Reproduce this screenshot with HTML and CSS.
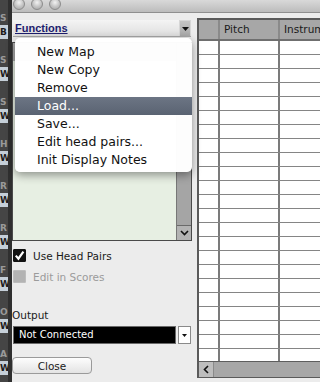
FILE: index.html
```html
<!DOCTYPE html>
<html lang="en">
<head>
    <meta charset="UTF-8">
    <meta name="viewport" content="width=device-width, initial-scale=1.0">
    <title>Drum Map</title>
    <link rel="stylesheet" href="styles.css">
</head>
<body>
<div class="screen">
    <!-- window behind, only its right edge shows -->
    <div class="backdrop">
        <div class="group"><div class="tag">S</div><div class="key">B</div></div>
        <div class="group"><div class="tag">S</div><div class="key">W</div></div>
        <div class="group"><div class="tag">S</div><div class="key">W</div></div>
        <div class="group"><div class="tag">H</div><div class="key">W</div></div>
        <div class="group"><div class="tag">R</div><div class="key">W</div></div>
        <div class="group"><div class="tag">R</div><div class="key">W</div></div>
        <div class="group"><div class="tag">F</div><div class="key">W</div></div>
        <div class="group"><div class="tag">O</div><div class="key">W</div></div>
        <div class="group"><div class="tag">A</div><div class="key">W</div></div>
    </div>

    <div class="window">
        <div class="titlebar">
            <span class="light"></span>
            <span class="light"></span>
            <span class="light"></span>
        </div>

        <div class="content">
            <div class="side">
                <div class="combo">
                    <span class="combo-text">Functions</span>
                    <span class="combo-arrow">
                        <svg width="7" height="4" viewBox="0 0 7 4"><polygon points="0,0 7,0 3.5,4" fill="#111"/></svg>
                    </span>
                </div>

                <div class="list">
                    <div class="list-body">
                        <div class="list-head"></div>
                    </div>
                    <div class="vscroll">
                        <div class="vtrack"></div>
                        <div class="vbtn">
                            <svg width="9" height="6" viewBox="0 0 9 6"><polyline points="1,1 4.5,4.5 8,1" fill="none" stroke="#111" stroke-width="1.6"/></svg>
                        </div>
                    </div>
                </div>

                <div class="check">
                    <span class="box box-on">
                        <svg width="13" height="13" viewBox="0 0 13 13"><polyline points="2.8,6.6 5.4,9.6 10.4,2.6" fill="none" stroke="#fff" stroke-width="2.2"/></svg>
                    </span>
                    <span>Use Head Pairs</span>
                </div>
                <div class="check check-off">
                    <span class="box"></span>
                    <span>Edit in Scores</span>
                </div>

                <div class="field-label">Output</div>
                <div class="output">
                    <span class="output-text">Not Connected</span>
                    <span class="output-arrow">
                        <svg width="5" height="3" viewBox="0 0 5 3"><polygon points="0,0 5,0 2.5,3" fill="#111"/></svg>
                    </span>
                </div>

                <button class="close-btn">Close</button>
            </div>

            <div class="table">
                <div class="thead">
                    <span></span>
                    <span>Pitch</span>
                    <span>Instrument</span>
                </div>
                <div class="tbody">
                    <div class="row"><span></span><span></span><span></span></div>
                    <div class="row"><span></span><span></span><span></span></div>
                    <div class="row"><span></span><span></span><span></span></div>
                    <div class="row"><span></span><span></span><span></span></div>
                    <div class="row"><span></span><span></span><span></span></div>
                    <div class="row"><span></span><span></span><span></span></div>
                    <div class="row"><span></span><span></span><span></span></div>
                    <div class="row"><span></span><span></span><span></span></div>
                    <div class="row"><span></span><span></span><span></span></div>
                    <div class="row"><span></span><span></span><span></span></div>
                    <div class="row"><span></span><span></span><span></span></div>
                    <div class="row"><span></span><span></span><span></span></div>
                    <div class="row"><span></span><span></span><span></span></div>
                    <div class="row"><span></span><span></span><span></span></div>
                    <div class="row"><span></span><span></span><span></span></div>
                    <div class="row"><span></span><span></span><span></span></div>
                    <div class="row"><span></span><span></span><span></span></div>
                    <div class="row"><span></span><span></span><span></span></div>
                    <div class="row"><span></span><span></span><span></span></div>
                    <div class="row"><span></span><span></span><span></span></div>
                    <div class="row"><span></span><span></span><span></span></div>
                    <div class="row"><span></span><span></span><span></span></div>
                    <div class="row"><span></span><span></span><span></span></div>
                </div>
                <div class="hscroll">
                    <div class="hbtn">
                        <svg width="6" height="9" viewBox="0 0 6 9"><polyline points="5,1 1.5,4.5 5,8" fill="none" stroke="#111" stroke-width="1.6"/></svg>
                    </div>
                </div>
            </div>

            <!-- open popup of the Functions combo -->
            <ul class="menu">
                <li>New Map</li>
                <li>New Copy</li>
                <li>Remove</li>
                <li class="active">Load...</li>
                <li>Save...</li>
                <li>Edit head pairs...</li>
                <li>Init Display Notes</li>
            </ul>
        </div>
    </div>
</div>
</body>
</html>
```

FILE: styles.css
```css
* {
    box-sizing: border-box;
}
body {
    margin: 0;
    font-family: "DejaVu Sans", sans-serif;
    background-color: #3f3f3f;
}
.screen {
    display: flex;
    width: 320px;
    height: 382px;
    overflow: hidden;
}

/* background window edge */
.backdrop {
    width: 12px;
    flex: none;
    display: flex;
    flex-direction: column;
    gap: 14px;
    padding-top: 11px;
    background-color: #454545;
    border-right: 4px solid #2f2f2f;
    overflow: hidden;
}
.tag, .key {
    height: 14px;
    line-height: 14px;
    font-size: 9px;
    font-weight: bold;
    white-space: nowrap;
}
.tag {
    color: #9a9a9a;
}
.key {
    background-color: #c5cfd8;
    color: #1c1c1c;
}

/* main window */
.window {
    flex: 1;
    min-width: 0;
    display: flex;
    flex-direction: column;
    background-color: #ececec;
}
.titlebar {
    height: 13px;
    flex: none;
    display: flex;
    gap: 6px;
    padding-left: 1px;
    background: linear-gradient(#d9d9d9, #bcbcbc);
    border-bottom: 1px solid #8f8f8f;
    overflow: hidden;
}
.light {
    width: 12px;
    height: 12px;
    margin-top: -2px;
    border-radius: 50%;
    border: 1px solid #8c8c8c;
    background: radial-gradient(circle at 50% 35%, #f2f2f2, #c2c2c2 55%, #a2a2a2);
}
.content {
    position: relative;
    flex: 1;
    display: flex;
    gap: 5px;
}

/* left column */
.side {
    width: 180px;
    flex: none;
    display: flex;
    flex-direction: column;
    padding-top: 7px;
}
.combo {
    display: flex;
    width: 178px;
    height: 17px;
    margin-left: 1px;
    background: linear-gradient(#f4f4f4, #dedede);
    border-bottom: 1px solid #a8a8a8;
}
.combo-text {
    flex: 1;
    padding-left: 2px;
    font-family: "Liberation Sans", Arial, sans-serif;
    font-size: 11px;
    font-weight: bold;
    line-height: 16px;
    color: #1d1d6e;
    text-decoration: underline;
}
.combo-arrow {
    width: 12px;
    display: flex;
    align-items: center;
    justify-content: center;
    background: linear-gradient(#c4c4c4, #a9a9a9);
    border: 1px solid #d6d6d6;
    border-bottom: none;
}
.list {
    display: flex;
    height: 199px;
    margin-top: 5px;
    border: 1px solid #4a4a4a;
    background-color: #e7efe3;
}
.list-body {
    flex: 1;
}
.list-head {
    height: 18px;
    background-color: #a9a9a9;
}
.vscroll {
    width: 15px;
    display: flex;
    flex-direction: column;
    border-left: 1px solid #777;
}
.vtrack {
    flex: 1;
    background-color: #a5a5a5;
}
.vbtn {
    height: 15px;
    display: flex;
    align-items: center;
    justify-content: center;
    background-color: #b3b3b3;
    border-top: 1px solid #6a6a6a;
}
.check {
    display: flex;
    align-items: center;
    gap: 7px;
    height: 13px;
    margin-top: 8px;
    margin-left: 1px;
    font-size: 10.5px;
    color: #1a1a1a;
}
.check-off {
    color: #9b9b9b;
}
.box {
    width: 13px;
    height: 13px;
    flex: none;
    border-radius: 1px;
    background-color: #b3b3b3;
    border: 1px solid #bdbdbd;
}
.box-on {
    background-color: #111;
    border-color: #111;
}
.box svg {
    display: block;
    margin: -1px;
}
.field-label {
    height: 14px;
    margin-top: 25px;
    font-size: 10.5px;
    line-height: 14px;
    color: #1a1a1a;
}
.output {
    display: flex;
    gap: 2px;
    height: 18px;
    margin-top: 4px;
    margin-left: 1px;
}
.output-text {
    width: 163px;
    padding-left: 5px;
    font-size: 10px;
    line-height: 16px;
    color: #fff;
    background-color: #000;
    border: 1px solid #6a6a6a;
}
.output-arrow {
    width: 13px;
    display: flex;
    align-items: center;
    justify-content: center;
    background-color: #fff;
    border: 1px solid #8a8a8a;
}
.close-btn {
    width: 80px;
    height: 17px;
    margin-top: 13px;
    padding: 0;
    font-family: "DejaVu Sans", sans-serif;
    font-size: 10.5px;
    color: #1a1a1a;
    background: linear-gradient(#fdfdfd, #e3e3e3);
    border: 1px solid #9a9a9a;
    border-radius: 4px;
}

/* drum table */
.table {
    width: 140px;
    height: 360px;
    flex: none;
    margin-top: 5px;
    display: flex;
    flex-direction: column;
    border-style: solid;
    border-color: #5a5a5a;
    border-width: 2px 0 1px 2px;
}
.thead, .row {
    display: grid;
    grid-template-columns: 21px 60px 1fr;
}
.thead {
    height: 21px;
    flex: none;
    background-color: #a7a7a7;
    border-bottom: 2px solid #6f6f6f;
}
.thead span {
    padding-left: 4px;
    font-size: 10.5px;
    line-height: 19px;
    color: #1a1a1a;
    white-space: nowrap;
    border-right: 2px solid #8a8a8a;
}
.tbody {
    flex: 1;
    overflow: hidden;
}
.row {
    height: 14px;
    background-color: #fff;
    border-bottom: 1px solid #858585;
}
.row span {
    border-right: 2px solid #7b7b7b;
}
.hscroll {
    height: 16px;
    flex: none;
    display: flex;
    background-color: #a7a7a7;
    border-top: 1px solid #5e5e5e;
}
.hbtn {
    width: 15px;
    display: flex;
    align-items: center;
    justify-content: center;
    background-color: #bdbdbd;
    border-right: 1px solid #8a8a8a;
}

/* popup menu */
.menu {
    position: absolute;
    left: 3px;
    top: 25px;
    width: 177px;
    margin: 0;
    padding: 5px 0 3px;
    list-style: none;
    background-color: rgba(255, 255, 255, 0.98);
    border-radius: 5px;
    box-shadow: 0 3px 10px rgba(0, 0, 0, 0.4);
}
.menu li {
    height: 18px;
    padding-left: 22px;
    font-size: 12.5px;
    line-height: 18px;
    color: #111;
}
.menu li.active {
    color: #fff;
    background: linear-gradient(#6c7584, #5a6372);
}
```
